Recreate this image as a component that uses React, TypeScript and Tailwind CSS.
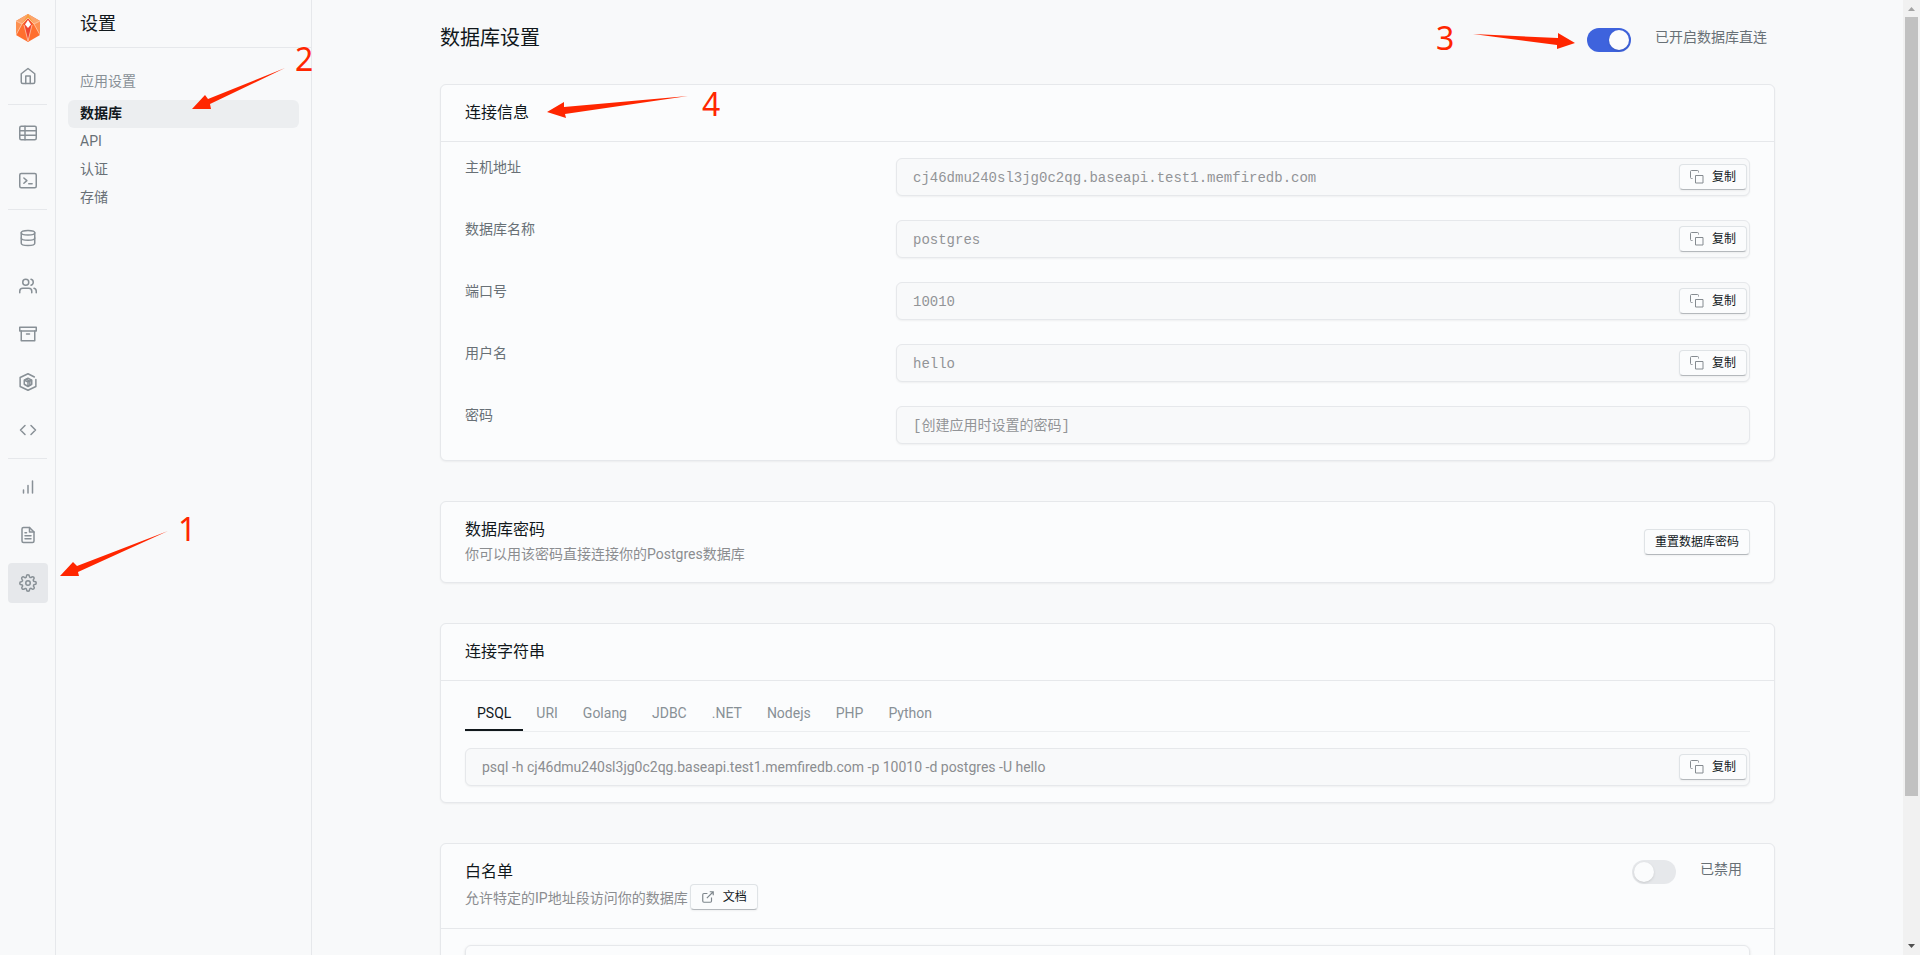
import { useState } from "react";
import type { ReactNode } from "react";

// Monochrome 24x24 outline icons used in the app rail
const ICONS: Record<string, ReactNode> = {
  home: (
    <>
      <path d="M3 9l9-7 9 7v11a2 2 0 0 1-2 2H5a2 2 0 0 1-2-2z" />
      <path d="M9 22V12h6v10" />
    </>
  ),
  table: (
    <>
      <rect x="1" y="3" width="22" height="18" rx="2" />
      <path d="M1 9h22M1 15h22M8 3v18" />
    </>
  ),
  terminal: (
    <>
      <rect x="1" y="2" width="22" height="19" rx="2" />
      <path d="M6.500 8l4 3.500-4 3.500M13 15.500h4.500" />
    </>
  ),
  database: (
    <>
      <ellipse cx="12" cy="5" rx="9" ry="3" />
      <path d="M21 12c0 1.660-4 3-9 3s-9-1.340-9-3" />
      <path d="M3 5v14c0 1.660 4 3 9 3s9-1.340 9-3V5" />
    </>
  ),
  users: (
    <>
      <path d="M17 21v-2a4 4 0 0 0-4-4H5a4 4 0 0 0-4 4v2" />
      <circle cx="9" cy="7" r="4" />
      <path d="M23 21v-2a4 4 0 0 0-3-3.870M16 3.130a4 4 0 0 1 0 7.750" />
    </>
  ),
  archive: (
    <>
      <path d="M21 8v13H3V8" />
      <path d="M1 3h22v5H1zM10 12h4" />
    </>
  ),
  functions: (
    <>
      <path d="M20.500 5.300L12 1 1.500 6v12L12 23l10.500-5V8.500" />
      <path d="M7 9.500l5-2.500 5 2.500v5.500l-5 3-5-3zM7 9.500l5 2.500 5-2.500M12 12v6" />
      <path d="M9.500 8.300l5 2.500v5.500" />
    </>
  ),
  code: <path d="M16 18l6-6-6-6M8 6l-6 6 6 6" />,
  chart: <path d="M18 20V4M12 20v-10M6 20v-4" />,
  file: (
    <>
      <path d="M14 2H6a2 2 0 0 0-2 2v16a2 2 0 0 0 2 2h12a2 2 0 0 0 2-2V8z" />
      <path d="M14 2v6h6M16 13H8M16 17H8M10 9H8" />
    </>
  ),
  settings: (
    <>
      <circle cx="12" cy="12" r="3" />
      <path d="M19.400 15a1.650 1.650 0 0 0 .33 1.820l.06.06a2 2 0 1 1-2.830 2.830l-.06-.06a1.650 1.650 0 0 0-2.820 1.170V21a2 2 0 0 1-4 0v-.09a1.650 1.650 0 0 0-2.900-1.090l-.06.06a2 2 0 1 1-2.830-2.830l.06-.06a1.650 1.650 0 0 0-1.170-2.820H3a2 2 0 0 1 0-4h.09a1.650 1.650 0 0 0 1.090-2.900l-.06-.06a2 2 0 1 1 2.830-2.830l.06.06a1.650 1.650 0 0 0 2.820-1.170V3a2 2 0 0 1 4 0v.09a1.650 1.650 0 0 0 2.820 1.170l.06-.06a2 2 0 1 1 2.830 2.830l-.06.06a1.650 1.650 0 0 0 1.170 2.820H21a2 2 0 0 1 0 4h-.09a1.650 1.650 0 0 0-1.510 1z" />
    </>
  ),
};

const RAIL_GROUPS = [
  [{ icon: "home", label: "首页" }],
  [
    { icon: "table", label: "表编辑器" },
    { icon: "terminal", label: "SQL 执行器" },
  ],
  [
    { icon: "database", label: "数据库" },
    { icon: "users", label: "用户认证" },
    { icon: "archive", label: "存储" },
    { icon: "functions", label: "云函数" },
    { icon: "code", label: "API" },
  ],
  [
    { icon: "chart", label: "报表" },
    { icon: "file", label: "日志" },
    { icon: "settings", label: "设置" },
  ],
];

const MENU = ["数据库", "API", "认证", "存储"];

const CONNECTION = [
  { id: "host", label: "主机地址", value: "cj46dmu240sl3jg0c2qg.baseapi.test1.memfiredb.com", copy: true },
  { id: "dbname", label: "数据库名称", value: "postgres", copy: true },
  { id: "port", label: "端口号", value: "10010", copy: true },
  { id: "user", label: "用户名", value: "hello", copy: true },
  { id: "password", label: "密码", value: "[创建应用时设置的密码]", copy: false },
];

const TABS = ["PSQL", "URI", "Golang", "JDBC", ".NET", "Nodejs", "PHP", "Python"];

function Logo() {
  return (
    <svg width="24" height="28" viewBox="0 0 24 28" aria-hidden="true">
      <path d="M12 0l12 7v14l-12 7L0 21V7z" fill="#ff6f2e" />
      <path d="M12 0l12 7-6 3-6-6-6 6-6-3z" fill="#fba66d" />
      <path d="M12 0l6 10-6-6-6 6z" fill="#f9a03c" />
      <path d="M0 7l6 3-6 11zM24 7l-6 3 6 11z" fill="#fd9050" />
      <path d="M12 4l4 6-4 17-4-17z" fill="#ee4430" />
      <path d="M0 7l6 3 6-6 6 6 6-3M6 10L0 21M18 10l6 11M8 11l4 16 4-16" fill="none" stroke="#ffd9c2" strokeWidth="0.7" />
      <path d="M12 6l3 4.500-3 3.500-3-3.500z" fill="#fff" />
    </svg>
  );
}

function Rail() {
  return (
    <nav className="flex w-14 shrink-0 flex-col border-r border-[#e6e8eb] px-2">
      <a href="#" aria-label="MemFire" className="flex h-14 w-10 items-center justify-center">
        <Logo />
      </a>
      {RAIL_GROUPS.map((group, i) => (
        <div
          key={i}
          className={`flex flex-col gap-2 ${i > 0 ? "mt-2 border-t border-[#e6e8eb] pt-2" : ""}`}
        >
          {group.map((item) => (
            <a
              key={item.icon}
              href="#"
              aria-label={item.label}
              className={`flex h-10 w-10 items-center justify-center rounded text-[#889096] ${
                item.icon === "settings" ? "bg-[#e6e8eb]" : ""
              }`}
            >
              <svg
                width="18"
                height="18"
                viewBox="0 0 24 24"
                fill="none"
                stroke="currentColor"
                strokeWidth="2"
                strokeLinecap="round"
                strokeLinejoin="round"
                className="overflow-visible"
              >
                {ICONS[item.icon]}
              </svg>
            </a>
          ))}
        </div>
      ))}
    </nav>
  );
}

function SideMenu() {
  return (
    <aside className="w-64 shrink-0 border-r border-[#e6e8eb]">
      <div className="flex h-12 items-center border-b border-[#e6e8eb] px-6">
        <h2 className="text-lg leading-6 text-[#11181c]">设置</h2>
      </div>
      <div className="px-3 pt-6">
        <p className="px-3 leading-[18px] text-[#889096]">应用设置</p>
        <ul className="mt-2.5">
          {MENU.map((item, i) => (
            <li key={item}>
              <a
                href="#"
                className={`block h-7 rounded-md px-3 leading-[26px] ${
                  i === 0 ? "bg-[#eceef0] font-bold text-[#11181c]" : "text-[#687076]"
                }`}
              >
                {item}
              </a>
            </li>
          ))}
        </ul>
      </div>
    </aside>
  );
}

function CardTitle({ children }: { children: ReactNode }) {
  return <h2 className="text-base leading-6 text-[#11181c]">{children}</h2>;
}

function Card({ header, children }: { header: ReactNode; children?: ReactNode }) {
  return (
    <section className="mb-10 rounded-md border border-[#e6e8eb] bg-[#fbfcfd] shadow-xs">
      <div className={`px-6 py-4 ${children ? "border-b border-[#e6e8eb]" : ""}`}>{header}</div>
      {children && <div className="px-6 py-4">{children}</div>}
    </section>
  );
}

function SmallButton({ icon, children }: { icon?: ReactNode; children: ReactNode }) {
  return (
    <button
      type="button"
      className="flex shrink-0 items-center gap-2 rounded border border-[#dfe3e6] border-b-[#b4b8bc] bg-[#fbfcfd] px-2.5 py-1 text-xs text-[#11181c] shadow-xs"
    >
      {icon}
      {children}
    </button>
  );
}

function CopyButton() {
  return (
    <SmallButton
      icon={
        <svg width="14" height="14" viewBox="0 0 14 14" fill="none" stroke="#858b90" aria-hidden="true">
          <path d="M2.500 8.500h-1a1 1 0 0 1-1-1v-6a1 1 0 0 1 1-1h6a1 1 0 0 1 1 1v1" />
          <path d="M5.500 5.500h7.500v7.500h-7.500z" />
        </svg>
      }
    >
      复制
    </SmallButton>
  );
}

function ReadOnlyField({ id, label, value, mono, copy }: {
  id: string;
  label?: string;
  value: string;
  mono?: boolean;
  copy?: boolean;
}) {
  return (
    <div className="flex h-[38px] items-center rounded-md border border-[#e6e8eb] bg-[#f8f9fa] pr-0.5 shadow-xs">
      <input
        id={id}
        aria-label={label}
        readOnly
        value={value}
        className={`min-w-0 flex-1 bg-transparent px-4 outline-none ${
          mono
            ? "pt-0.5 font-['Liberation_Mono','Noto_Sans_CJK_SC',monospace] text-[#929497]"
            : "text-[#8b8d90]"
        }`}
      />
      {copy && <CopyButton />}
    </div>
  );
}

function Toggle({ defaultOn, label }: { defaultOn: boolean; label: string }) {
  const [on, setOn] = useState(defaultOn);
  return (
    <label className="flex items-start gap-6 pr-2 text-[#687076]">
      <input type="checkbox" role="switch" checked={on} onChange={() => setOn(!on)} className="sr-only" />
      <span className={`flex h-6 w-11 rounded-full p-0.5 ${on ? "justify-end bg-[#3e63dd]" : "bg-[#e6e8eb]"}`}>
        <span className="h-5 w-5 rounded-full bg-[#fbfcfd] shadow-sm" />
      </span>
      <span className="leading-[18px]">{label}</span>
    </label>
  );
}

function Scrollbar() {
  return (
    <div className="flex w-[17px] shrink-0 flex-col items-center bg-[#f1f1f1]" aria-hidden="true">
      <svg width="17" height="17">
        <path d="M5 11h7L8.500 7z" fill="#a3a3a3" />
      </svg>
      <div className="flex w-full flex-1 flex-col px-0.5">
        <div className="h-[84.600%] bg-[#c1c1c1]" />
      </div>
      <svg width="17" height="17">
        <path d="M5 6h7l-3.500 4z" fill="#505050" />
      </svg>
    </div>
  );
}

// Numbered red arrows that walk through the steps
function Annotations() {
  return (
    <svg className="pointer-events-none absolute left-0 top-0 h-[955px] w-[1920px]" viewBox="0 0 1920 955" fill="#ff2600">
      <path d="M60 576l13-14 4 4 91-35-90 41 1 4z" />
      <path d="M192 109l13-14 3 4 77-31-75 36 1 5z" />
      <path d="M1575 43l-17-10v5l-85-4 84 11v4z" />
      <path d="M547 112l17-10v5l124-11-123 18 1 4z" />
      <g className="font-['Noto_Sans',sans-serif] text-[32px]">
        <text x="178" y="541">1</text>
        <text x="295" y="71">2</text>
        <text x="1436" y="50">3</text>
        <text x="702" y="116">4</text>
      </g>
    </svg>
  );
}

export default function App() {
  const [tab, setTab] = useState("PSQL");

  return (
    <div className="relative flex h-screen overflow-hidden bg-[#f8f9fa] font-['Roboto','Noto_Sans_CJK_SC',sans-serif] text-sm">
      <Rail />
      <SideMenu />

      <main className="min-w-0 flex-1 overflow-hidden px-32">
        <div className="flex h-[84px] items-start justify-between">
          <h1 className="pt-6 text-xl leading-7 text-[#11181c]">数据库设置</h1>
          <div className="pt-7">
            <Toggle defaultOn label="已开启数据库直连" />
          </div>
        </div>

        <Card header={<CardTitle>连接信息</CardTitle>}>
          <div className="flex flex-col gap-6">
            {CONNECTION.map((f) => (
              <div key={f.id} className="grid grid-cols-12 gap-2">
                <label htmlFor={f.id} className="col-span-4 leading-[18px] text-[#687076]">
                  {f.label}
                </label>
                <div className="col-span-8">
                  <ReadOnlyField id={f.id} value={f.value} copy={f.copy} mono />
                </div>
              </div>
            ))}
          </div>
        </Card>

        <Card
          header={
            <div className="flex items-center justify-between">
              <div>
                <CardTitle>数据库密码</CardTitle>
                <p className="leading-6 text-[#8b8d90]">你可以用该密码直接连接你的Postgres数据库</p>
              </div>
              <SmallButton>重置数据库密码</SmallButton>
            </div>
          }
        />

        <Card header={<CardTitle>连接字符串</CardTitle>}>
          <div role="tablist" className="mb-4 flex gap-px border-b border-[#eceef0]">
            {TABS.map((t) => (
              <button
                key={t}
                type="button"
                role="tab"
                aria-selected={t === tab}
                onClick={() => setTab(t)}
                className={`h-[34px] border-b-2 px-3 ${
                  t === tab ? "border-[#11181c] text-[#11181c]" : "border-transparent text-[#889096]"
                }`}
              >
                {t}
              </button>
            ))}
          </div>
          <ReadOnlyField
            id="conn-string"
            label="连接字符串"
            value="psql -h cj46dmu240sl3jg0c2qg.baseapi.test1.memfiredb.com -p 10010 -d postgres -U hello"
            copy
          />
        </Card>

        <Card
          header={
            <div className="flex items-start justify-between">
              <div>
                <CardTitle>白名单</CardTitle>
                <div className="flex items-start gap-0.5">
                  <p className="leading-7 text-[#8b8d90]">允许特定的IP地址段访问你的数据库</p>
                  <SmallButton
                    icon={
                      <svg width="14" height="14" viewBox="0 0 24 24" fill="none" stroke="#7e868c" strokeWidth="2" aria-hidden="true">
                        <path d="M18 13v6a2 2 0 0 1-2 2H5a2 2 0 0 1-2-2V8a2 2 0 0 1 2-2h6M15 3h6v6M10 14L21 3" />
                      </svg>
                    }
                  >
                    文档
                  </SmallButton>
                </div>
              </div>
              <Toggle defaultOn={false} label="已禁用" />
            </div>
          }
        >
          <div className="h-32 rounded-md border border-[#e6e8eb] shadow-sm" />
        </Card>
      </main>

      <Scrollbar />
      <Annotations />
    </div>
  );
}
